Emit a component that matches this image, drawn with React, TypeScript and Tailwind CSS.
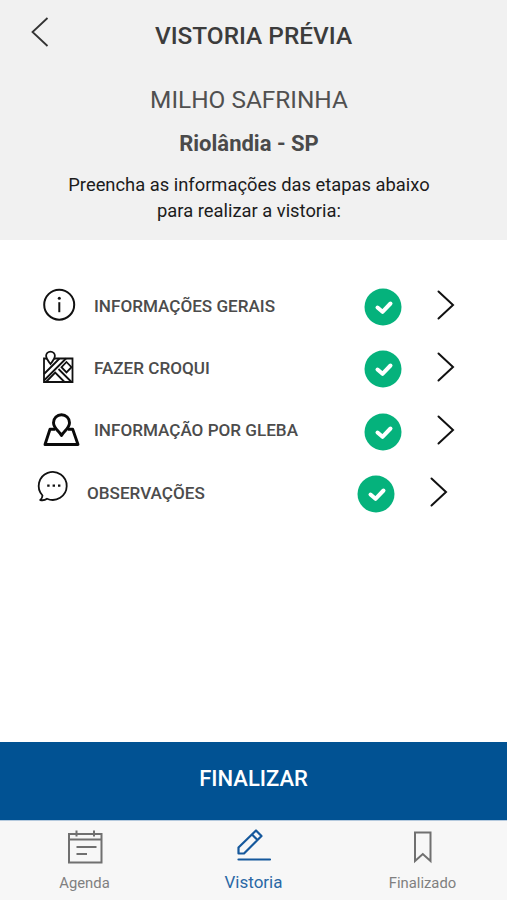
import React from "react";

const InfoIcon = () => (
  <svg className="h-[62px] w-12 shrink-0" viewBox="0 0 48 62" fill="none" stroke="#111" strokeWidth="2">
    <circle cx="21.2" cy="29.7" r="15" />
    <path d="M21.3 27.2v10" />
    <circle cx="21.3" cy="23.3" r="1.5" fill="#111" stroke="none" />
  </svg>
);

const MapIcon = () => (
  <svg className="h-[62px] w-12 shrink-0" viewBox="0 0 48 62" fill="none" stroke="#111" strokeWidth="1.8">
    <path d="M6 21.500h28.500V45H6z" />
    <path d="M6 37L21.500 21.500M6 43.500L28 21.500" />
    <path d="M8 45L17.200 35.500l9.300 9.500M20.500 32l13 13" />
    <path d="M28.500 25l5 5.200-5 5.200-5-5.200z" />
    <path
      d="M12.500 27c-1.700-2.500-4.400-4.700-4.400-8a4.400 4.400 0 0 1 8.800 0c0 3.300-2.700 5.500-4.400 8z"
      fill="#fff"
    />
  </svg>
);

const PlotIcon = () => (
  <svg className="h-[62px] w-12 shrink-0" viewBox="0 0 48 62" fill="none" stroke="#0a0a0a" strokeWidth="2.900" strokeLinejoin="round">
    <path d="M17 29.300h-5L7 44.500h33L34.700 29.300H30" />
    <path d="M23.500 35.500c-2.500-4.500-8-7.200-8-12.800a8 8 0 0 1 16 0c0 5.600-5.500 8.300-8 12.800z" />
  </svg>
);

const ChatIcon = () => (
  <svg className="h-[62px] w-12 shrink-0" viewBox="0 0 48 62" fill="none" stroke="#111" strokeWidth="1.800" strokeLinejoin="round">
    <path d="M11.500 33.500a14 14 0 1 1 4.500 3.200c-2 1.500-4.500 1.800-6.800 1.300 1.500-1.200 2.200-2.500 2.300-4.500z" />
    <path d="M16.200 23.700h2.400M21.600 23.700h2.400M27 23.700h2.400" strokeWidth="2.200" />
  </svg>
);

const CheckBadge = () => (
  <svg className="mt-0.5 size-[38px]" viewBox="0 0 38 38">
    <circle cx="19" cy="19" r="18.500" fill="#05b27c" />
    <path d="M13.500 19.500l5 4.300 8-8.300" fill="none" stroke="#fff" strokeWidth="4" strokeLinecap="round" strokeLinejoin="round" />
  </svg>
);

const Chevron = () => (
  <svg className="mb-0.5 h-[30px] w-[18px]" viewBox="0 0 18 30" fill="none" stroke="#111" strokeWidth="2" strokeLinecap="round">
    <path d="M1.500 1.500l14.500 13.500-14.500 13.500" />
  </svg>
);

const CalendarIcon = () => (
  <svg className="h-9 w-10" viewBox="0 0 40 36" fill="none" stroke="#707070" strokeWidth="2">
    <path d="M4 5h32.500v28.500H4zM4 10.500h32.500M11.500 1.500v6M29 1.500v6M11.500 18h20M11.500 25h10.500" />
  </svg>
);

const PencilIcon = () => (
  <svg className="h-9 w-10" viewBox="0 0 40 36" fill="none" stroke="#15589c" strokeWidth="2.200" strokeLinejoin="round">
    <path d="M4.500 24.500v-6L22 1.500l5.500 5.500-17.500 17.500zM18 5.500l5.500 5.500" />
    <path d="M4.500 30.500h31.500" strokeLinecap="round" />
  </svg>
);

const BookmarkIcon = () => (
  <svg className="h-9 w-10" viewBox="0 0 40 36" fill="none" stroke="#707070" strokeWidth="2">
    <path d="M12 3.500h15.500v28.500l-7.700-7-7.800 7z" />
  </svg>
);

const steps = [
  { label: "INFORMAÇÕES GERAIS", icon: <InfoIcon />, className: "pl-[38px] pr-[52px]" },
  { label: "FAZER CROQUI", icon: <MapIcon />, className: "pl-[38px] pr-[52px]" },
  { label: "INFORMAÇÃO POR GLEBA", icon: <PlotIcon />, className: "pl-[38px] pr-[52px]" },
  { label: "OBSERVAÇÕES", icon: <ChatIcon />, className: "pl-[31px] pr-[59px]" },
];

const tabs = [
  { label: "Agenda", icon: <CalendarIcon />, className: "mt-1.5 text-[14.800px] text-[#808080]" },
  { label: "Vistoria", icon: <PencilIcon />, className: "mt-[5px] text-[17px] text-[#2a68a5]" },
  { label: "Finalizado", icon: <BookmarkIcon />, className: "mt-1.5 text-[14.800px] text-[#808080]" },
];

const App: React.FC = () => {
  return (
    <div className="flex h-[900px] w-[507px] flex-col overflow-hidden bg-white font-[Roboto,sans-serif]">
      <header className="h-[240px] shrink-0 bg-[#f1f1f1] text-center">
        <div className="flex h-[70px] items-center">
          <svg className="-mt-1.5 ml-[30px] h-[30px] w-[20px]" viewBox="0 0 20 30" fill="none" stroke="#333" strokeWidth="1.800">
            <path d="M17.500 1l-15 14 15 14" />
          </svg>
          <h1 className="grow pt-0.5 pr-[50px] text-[24.400px] font-medium text-[#3c3c3c]">VISTORIA PRÉVIA</h1>
        </div>
        <div className="pr-[9px]">
          <h2 className="pt-3 text-[24.400px] leading-9 text-[#505050]">MILHO SAFRINHA</h2>
          <h3 className="pt-2 text-[22px] leading-9 font-bold text-[#4a4a4a]">Riolândia - SP</h3>
          <p className="pt-[10px] text-[18.350px] leading-[26px] text-[#1c1c1c]">
            Preencha as informações das etapas abaixo
            <br />
            para realizar a vistoria:
          </p>
        </div>
      </header>

      <main className="grow pt-[35px]">
        {steps.map((step) => (
          <div key={step.label} className={`flex h-[62.300px] items-center ${step.className}`}>
            {step.icon}
            <span className="mt-px ml-2 grow text-[17.100px] font-medium whitespace-nowrap text-[#4c4c4c]">
              {step.label}
            </span>
            <CheckBadge />
            <span className="ml-[35px]">
              <Chevron />
            </span>
          </div>
        ))}
      </main>

      <button className="flex h-[78px] shrink-0 items-center justify-center bg-[#015293] pb-1.5 text-[22px] font-medium text-white">
        FINALIZAR
      </button>

      <nav className="flex h-20 shrink-0 border-t border-[#b5cade] bg-[#f7f7f7] pt-2">
        {tabs.map((tab) => (
          <div key={tab.label} className="flex flex-1 flex-col items-center">
            {tab.icon}
            <span className={`leading-6 ${tab.className}`}>{tab.label}</span>
          </div>
        ))}
      </nav>
    </div>
  );
};

export default App;
